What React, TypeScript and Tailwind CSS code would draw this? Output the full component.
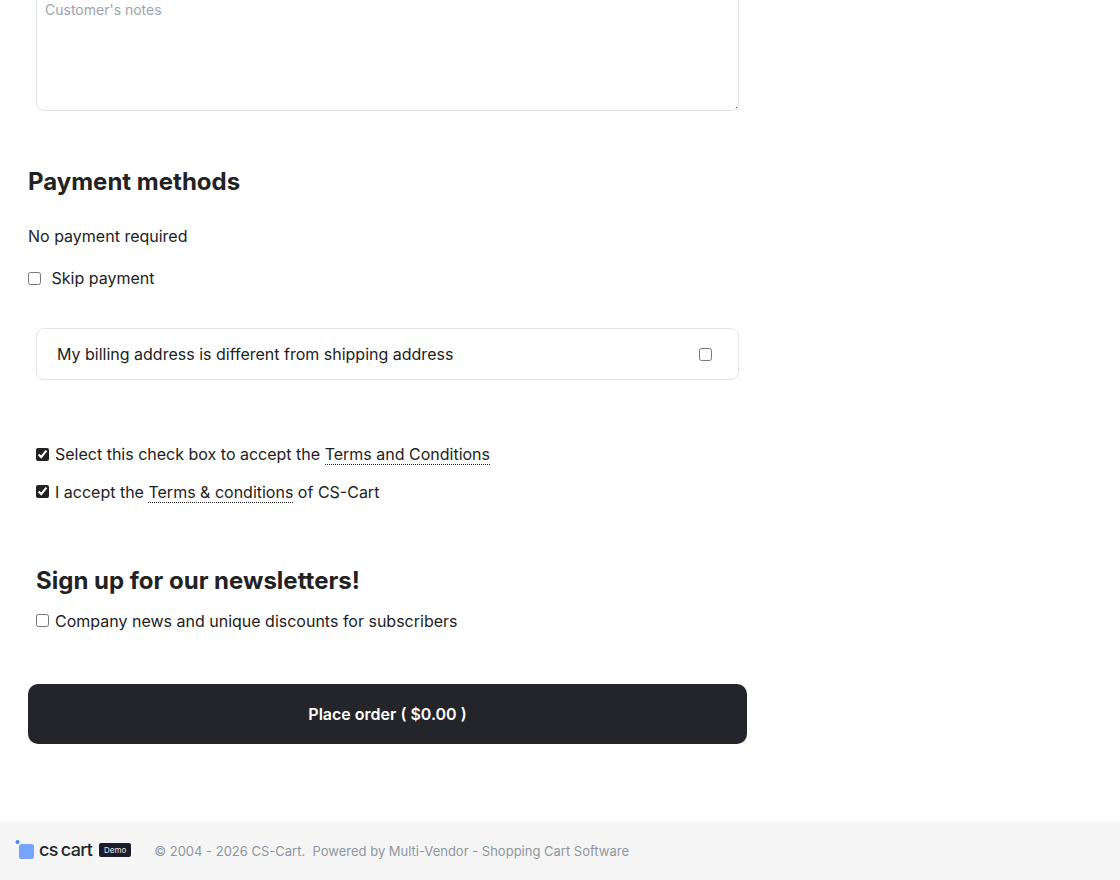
import { ChangeEvent } from 'react';

const TEXT = 'text-[#222222]';

function Dotted({ children }: { children: string }) {
  return <span className="border-b border-dotted border-[#212121]">{children}</span>;
}

function Logo() {
  return (
    <div className="flex items-center">
      <svg width="21" height="20" viewBox="0 0 21 20" className="-mt-[4px]">
        <circle cx="3.5" cy="3" r="2" fill="#4f86f0" />
        <rect x="5" y="5" width="15" height="15" rx="2.5" fill="#76a3fc" />
      </svg>
      <span className="ml-[4px] -mt-[3px] font-['Inter',sans-serif] text-[18px] font-medium tracking-[-0.7px] [word-spacing:-1px] text-[#22242a] leading-none">
        cs cart
      </span>
      <span className="ml-[7px] -mt-[3px] flex h-[14px] w-[32px] items-center justify-center rounded-[2px] bg-[#1a1c2b] text-[8px] text-[#e5e7eb]">
        Demo
      </span>
    </div>
  );
}

export default function App() {
  const noop = (_e: ChangeEvent<HTMLInputElement>) => {};

  return (
    <div className={`flex h-[880px] w-[1120px] flex-col overflow-hidden bg-white font-['Inter',sans-serif] text-base ${TEXT}`}>
      <div className="w-[747px] flex-1 pl-[28px]">
        <div className="relative px-2">
          <textarea
            placeholder="Customer's notes"
            readOnly
            className="-mt-[20px] block h-[131px] w-full resize-none rounded-lg border border-[#e0e2e6] px-2 pt-[19px] text-sm leading-[20px] outline-none placeholder:text-[#9ca3af]"
          />
          <span className="absolute right-[10px] bottom-[3px] size-px bg-[#444]" />
        </div>

        <h2 className="mt-[55px] text-2xl leading-[32px] font-bold">Payment methods</h2>
        <p className="mt-[26px] leading-[24px]">No payment required</p>
        <label className="mt-[18px] flex items-center leading-[24px]">
          <input type="checkbox" className="mr-[10.5px] size-[13px]" />
          Skip payment
        </label>

        <div className="mx-2 mt-[38px] flex h-[52px] items-center justify-between rounded-lg border border-[#e2e4e8] pr-[26px] pl-5">
          <span>My billing address is different from shipping address</span>
          <input type="checkbox" className="size-[13px]" />
        </div>

        <div className="mt-[62px] px-2">
          <label className="flex items-center leading-[24px]">
            <input type="checkbox" checked onChange={noop} className="mr-[6px] size-[13px] accent-[#212121]" />
            <span>
              Select this check box to accept the <Dotted>Terms and Conditions</Dotted>
            </span>
          </label>
          <label className="mt-[14px] flex items-center leading-[24px]">
            <input type="checkbox" checked onChange={noop} className="mr-[6px] size-[13px] -translate-y-px accent-[#212121]" />
            <span>
              I accept the <Dotted>Terms & conditions</Dotted> of CS-Cart
            </span>
          </label>

          <h2 className="mt-[61px] text-2xl leading-[32px] font-bold">Sign up for our newsletters!</h2>
          <label className="mt-[12px] flex items-center leading-[24px]">
            <input type="checkbox" className="mr-[6px] size-[13px] -translate-y-px" />
            Company news and unique discounts for subscribers
          </label>
        </div>

        <button
          type="button"
          className="mt-[51px] h-[60px] w-full rounded-[10px] bg-[#24252b] font-semibold text-white"
        >
          Place order ( $0.00 )
        </button>
      </div>

      <footer className="flex h-[58px] items-center bg-[#f5f5f5] pl-[14px]">
        <Logo />
        <span className="ml-[23px] pt-[1px] text-[13px] text-[#8f96a0]">
          © 2004 - 2026 CS-Cart.&nbsp; Powered by Multi-Vendor - Shopping Cart Software
        </span>
      </footer>
    </div>
  );
}
